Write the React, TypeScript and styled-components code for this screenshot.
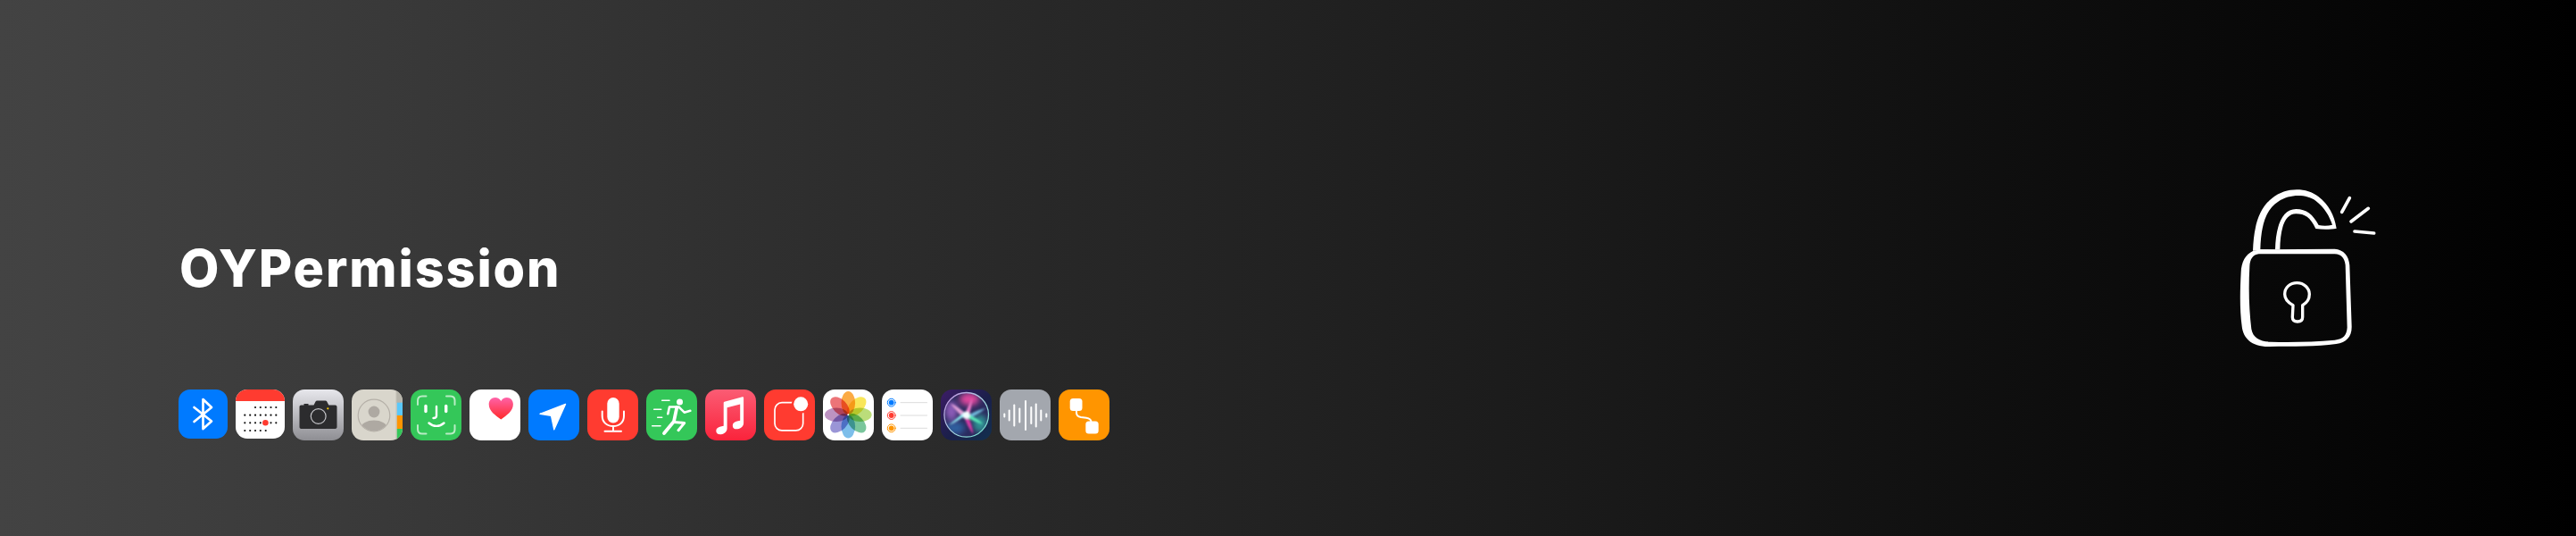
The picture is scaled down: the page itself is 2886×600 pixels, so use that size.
import React from "react";
import styled, { createGlobalStyle } from "styled-components";

const Global = createGlobalStyle`
  html, body { margin: 0; padding: 0; background: #000; }
`;

const Banner = styled.div`
  width: 2886px;
  height: 600px;
  box-sizing: border-box;
  padding: 0 224px 0 200px;
  display: flex;
  justify-content: space-between;
  background: linear-gradient(90deg, #434343 0%, #000 100%);
  overflow: hidden;
`;

const Intro = styled.div`
  display: flex;
  flex-direction: column;
  padding-top: 266px;
`;

const Title = styled.h1`
  margin: 0 0 102px;
  padding-left: 1px;
  font-family: "Inter", "Liberation Sans", sans-serif;
  font-weight: 800;
  font-size: 57.5px;
  line-height: 68px;
  letter-spacing: 1.9px;
  color: #fff;
`;

const IconRow = styled.div`
  display: flex;
  gap: 9px;
`;

const Tile = styled.div<{ $bg: string; $size?: number }>`
  width: ${(p) => p.$size ?? 57}px;
  height: ${(p) => p.$size ?? 57}px;
  border-radius: 13px;
  overflow: hidden;
  background: ${(p) => p.$bg};
  flex: none;
  svg { display: block; width: 100%; height: 100%; }
`;

const LockBox = styled.div`
  padding-top: 190px;
  margin-right: -17px;
  svg { display: block; width: 190px; height: 210px; }
`;

const Petal = styled.ellipse`
  mix-blend-mode: multiply;
`;

const Ico: React.FC<{ children: React.ReactNode; size?: number }> = ({ children, size = 57 }) => (
  <svg viewBox={`0 0 ${size} ${size}`} fill="none" strokeLinecap="round" strokeLinejoin="round">
    {children}
  </svg>
);

const Bluetooth = () => (
  <Tile $bg="#007aff" $size={55}>
    <Ico size={55}>
      <path d="M17.5 20L37 35.500L27.500 44V11L37 20L17.500 36" stroke="#fff" strokeWidth="2.700" />
    </Ico>
  </Tile>
);

const calRows: number[][] = [
  [22, 27.8, 33.7, 39.5, 45.3],
  [10.3, 16.2, 22, 27.8, 33.7, 39.5, 45.3],
  [10.3, 16.2, 22, 27.8, 39.5, 45.3],
  [10.3, 16.2, 22, 27.8, 33.7],
];
const calY = [20, 28.7, 37.3, 46];

const Calendar = () => (
  <Tile $bg="#fff" $size={55}>
    <Ico size={55}>
      <rect width="55" height="13" fill="#ff3b30" />
      {calRows.map((r, i) =>
        r.map((x) => <circle key={`${i}-${x}`} cx={x} cy={calY[i]} r="1.100" fill="#111" />)
      )}
      <circle cx="33.400" cy="37.300" r="3.300" fill="#ff3b30" />
    </Ico>
  </Tile>
);

const Camera = () => (
  <Tile $bg="linear-gradient(180deg, #e7e7ec 0%, #8e8e93 100%)">
    <Ico>
      <path d="M9.500 17.500h3v-1.600h5v1.600h6l2.200-4.200c.3-.6.8-.9 1.400-.9h9.600c.6 0 1.100.3 1.400.9l2.200 4.200h7.200c1.200 0 2 .8 2 2v22.600c0 1.200-.8 2-2 2H9.500c-1.200 0-2-.8-2-2V19.500c0-1.200.8-2 2-2z" fill="#2c2c2e" />
      <circle cx="28.700" cy="30" r="8.400" stroke="#c4c4c8" strokeWidth="1.200" />
      <circle cx="39.300" cy="21.300" r="1.100" fill="#ffcc00" />
    </Ico>
  </Tile>
);

const Contacts = () => (
  <Tile $bg="#d9d6cc">
    <Ico>
      <rect x="50" width="7" height="15" fill="#b7b4aa" />
      <rect x="50.500" y="14.700" width="6.500" height="14.300" fill="#5ac8fa" />
      <rect x="50.500" y="29" width="6.500" height="15" fill="#ff9500" />
      <rect x="50.500" y="44" width="6.500" height="13" fill="#34c759" />
      <rect x="49.500" width="1" height="57" fill="#c3c0b6" />
      <clipPath id="contactClip"><circle cx="25" cy="29" r="17.500" /></clipPath>
      <circle cx="25" cy="25" r="6.400" fill="#aea9a2" />
      <ellipse cx="25" cy="43" rx="14.500" ry="8.500" fill="#aea9a2" clipPath="url(#contactClip)" />
      <circle cx="25" cy="29" r="17.800" stroke="#b5b0a8" strokeWidth="1.200" />
    </Ico>
  </Tile>
);

const FaceId = () => (
  <Tile $bg="#34c759">
    <Ico>
      <g stroke="#b9ecc5" strokeWidth="2">
        <path d="M8 17v-4.500c0-3 2-5 5-5h4.500" />
        <path d="M40 7.500h4.500c3 0 5 2 5 5V17" />
        <path d="M8 40v4.500c0 3 2 5 5 5h4.500" />
        <path d="M40 49.500h4.500c3 0 5-2 5-5V40" />
      </g>
      <g stroke="#fff" strokeWidth="2.400">
        <path d="M17 18.500v6" strokeWidth="3.400" />
        <path d="M39.700 18.500v6" strokeWidth="3.400" />
        <path d="M29 19v10.500c0 1.500-1 2.500-3.500 2.500" />
        <path d="M20.500 37.500c5 4.500 12 4.500 17 0" />
      </g>
    </Ico>
  </Tile>
);

const Health = () => (
  <Tile $bg="#fff">
    <Ico>
      <defs>
        <linearGradient id="heartGrad" x1="0" y1="0" x2="0" y2="1">
          <stop offset="0" stopColor="#ff62a8" />
          <stop offset="1" stopColor="#ff2a2a" />
        </linearGradient>
      </defs>
      <path d="M35.300 33.500C29 29 21.700 24 21.700 16.500C21.700 12 24.800 9 28.700 9C31.500 9 34 10.500 35.300 13C36.600 10.500 39.100 9 41.900 9C45.800 9 48.900 12 48.900 16.500C48.900 24 41.600 29 35.300 33.500Z" fill="url(#heartGrad)" />
    </Ico>
  </Tile>
);

const Location = () => (
  <Tile $bg="#007aff">
    <Ico>
      <path d="M41.500 16.500L13 27.300L25.500 29.200L28.800 44.800Z" fill="#fff" stroke="#fff" strokeWidth="1.400" />
    </Ico>
  </Tile>
);

const Mic = () => (
  <Tile $bg="#ff3b30">
    <Ico>
      <rect x="22.300" y="9" width="13.400" height="28.500" rx="6.700" fill="#fff" />
      <path d="M16.700 24.500v5c0 7 5 11.500 12.300 11.500s12-4.500 12-11.500v-5M29 41v5.800M19.500 46.800h18.500" stroke="#fff" strokeWidth="2" />
    </Ico>
  </Tile>
);

const Fitness = () => (
  <Tile $bg="#34c759">
    <Ico>
      <circle cx="37.500" cy="14" r="3.500" fill="#fff" />
      <g stroke="#fff">
        <path d="M17.700 12.300H26M8.700 22.300H16.700M12.700 31.300H17.700M6.700 40.700H16" strokeWidth="1.600" />
        <path d="M24.300 27.300L26 19.500H36.500L42.700 25.700L49.300 23.800" strokeWidth="2.600" />
        <path d="M34.300 20L31 35.700L20 49" strokeWidth="3.800" />
        <path d="M31 36.500L42.700 37.500L36 45.700" strokeWidth="3" />
      </g>
    </Ico>
  </Tile>
);

const Music = () => (
  <Tile $bg="linear-gradient(180deg, #fb5c74 0%, #fa233b 100%)">
    <Ico>
      <path d="M21.500 13.800L41.800 8.200c.8-.2 1.300.2 1.300 1V37.500c0 3.500-2.800 6.300-6.800 6.800-3.300.4-5.500-1.200-5.500-3.900 0-2.600 1.900-4.300 5-4.900l3.400-.7V16.600L24.600 20.300V43.500c0 3.500-2.800 6.100-6.800 6.700-3.300.4-5.500-1.200-5.500-3.900 0-2.600 1.900-4.300 5-4.900l3.400-.7V15c0-.6.200-1 .8-1.200Z" fill="#fff" />
    </Ico>
  </Tile>
);

const Notification = () => (
  <Tile $bg="#ff3b30">
    <Ico>
      <rect x="12" y="14.700" width="31.700" height="31.200" rx="8" stroke="#fff" strokeWidth="1.700" />
      <circle cx="41.200" cy="16.300" r="10.500" fill="#ff3b30" />
      <circle cx="41.200" cy="16.300" r="8" fill="#fff" />
    </Ico>
  </Tile>
);

const petals: [number, string][] = [
  [0, "#fbab45"],
  [45, "#f9e65a"],
  [90, "#bbdd7a"],
  [135, "#7ac69c"],
  [180, "#7dbeea"],
  [225, "#9a95d6"],
  [270, "#bd93c2"],
  [315, "#ec7478"],
];

const Photos = () => (
  <Tile $bg="#fff">
    <Ico>
      {petals.map(([a, c]) => (
        <Petal key={a} cx="28.300" cy="15" rx="7.800" ry="13" fill={c} transform={`rotate(${a} 28.300 28.300)`} />
      ))}
      <circle cx="28.300" cy="28.300" r="1" fill="#fff" />
    </Ico>
  </Tile>
);

const Reminders = () => (
  <Tile $bg="#fff">
    <Ico>
      {([
        [14.700, "#007aff"],
        [29, "#ff3b30"],
        [43.300, "#ff9500"],
      ] as [number, string][]).map(([y, c]) => (
        <g key={y}>
          <circle cx="10.700" cy={y} r="4.400" stroke={c} strokeWidth="1" />
          <circle cx="10.700" cy={y} r="2.900" fill={c} />
          <path d={`M21 ${y}H50.500`} stroke="#dcdcdc" strokeWidth="1" />
        </g>
      ))}
    </Ico>
  </Tile>
);

const Siri = () => (
  <Tile $bg="linear-gradient(135deg, #3c1c66 0%, #1a1f4a 55%, #12304f 100%)">
    <Ico>
      <defs>
        <linearGradient id="siriRing" x1="0" y1="0" x2="1" y2="1">
          <stop offset="0" stopColor="#c48ae0" />
          <stop offset="0.500" stopColor="#a9cfe0" />
          <stop offset="1" stopColor="#6fe6cf" />
        </linearGradient>
        <filter id="siriBlur" x="-30%" y="-30%" width="160%" height="160%">
          <feGaussianBlur stdDeviation="3" />
        </filter>
        <filter id="siriSoft" x="-30%" y="-30%" width="160%" height="160%">
          <feGaussianBlur stdDeviation="0.800" />
        </filter>
        <clipPath id="siriClip"><circle cx="28.700" cy="28.300" r="24.800" /></clipPath>
      </defs>
      <circle cx="28.700" cy="28.300" r="24.800" fill="#2b2a5e" />
      <g clipPath="url(#siriClip)">
        <g filter="url(#siriBlur)">
          <ellipse cx="32" cy="11" rx="11" ry="7" fill="#e0479e" />
          <ellipse cx="12" cy="24" rx="7" ry="11" fill="#8c5bb8" />
          <ellipse cx="16" cy="43" rx="11" ry="7" fill="#2f5f9e" />
          <ellipse cx="44" cy="38" rx="8" ry="10" fill="#2f8f92" />
        </g>
        <g filter="url(#siriSoft)">
          <path d="M30 29C22 21 15 17 11 16C16 22 21 28 26 32Z" fill="#e2a0d8" />
          <path d="M30 29C34 37 36 45 36 50C32 44 28 37 26 30Z" fill="#d43aa6" />
          <path d="M27 27L35 10C34.500 17 33.500 24 31 31Z" fill="#ef7ccb" />
          <path d="M28 30C37 25 45 22 50 21C43 27 36 31 30 33Z" fill="#6fb7d9" />
          <path d="M29 27C36 30 44 34 47 39C40 37 33 33 27 31Z" fill="#58e6b8" />
          <path d="M31 27C23 32 16 37 9 40C16 34 22 29 27 25Z" fill="#8ff0f5" />
          <circle cx="28.700" cy="28.800" r="4" fill="#f2feff" />
        </g>
      </g>
      <circle cx="28.700" cy="28.300" r="24.800" stroke="url(#siriRing)" strokeWidth="1.300" />
    </Ico>
  </Tile>
);

const voiceBars: [number, number][] = [
  [5.300, 3],
  [10.700, 11],
  [16.300, 23],
  [22.300, 15],
  [29, 32],
  [35.300, 18],
  [40.700, 25],
  [46.300, 11],
  [52.300, 3],
];

const Voice = () => (
  <Tile $bg="#a3a7ae">
    <Ico>
      {voiceBars.map(([x, h]) => (
        <path key={x} d={`M${x} ${29 - h / 2}V${29 + h / 2}`} stroke="#fff" strokeWidth="2" />
      ))}
    </Ico>
  </Tile>
);

const Shortcuts = () => (
  <Tile $bg="#ff9500">
    <Ico>
      <rect x="12.700" y="10" width="13.800" height="14" rx="3.500" fill="#fff" />
      <rect x="30.300" y="35.500" width="14.400" height="14" rx="3.500" fill="#fff" />
      <path d="M20 23v3c0 3 2 4.500 5 5l6 .8c3.500.5 5.500 1.500 5.500 4.700" stroke="#fff" strokeWidth="2" />
    </Ico>
  </Tile>
);

const Lock = () => (
  <svg viewBox="0 0 570 630" fill="none" aria-hidden="true">
    <path
      fill="#fff"
      fillRule="evenodd"
      d="M105 272C108 190 125 130 170 95C215 58 285 58 325 90C360 118 378 150 386 197C365 201 340 201 316 198C298 160 280 148 250 148C215 148 197 190 196 268ZM130 268C132 195 145 135 190 107C230 80 285 82 316 104C346 127 362 155 372 185C358 189 340 189 326 186C307 150 285 132 250 132C205 132 182 185 180 268Z"
    />
    <path
      fill="#fff"
      fillRule="evenodd"
      d="M105 273C80 285 66 310 65 345C62 400 60 470 68 525C72 565 100 595 160 594C240 592 320 595 385 585C420 580 438 560 437 525L430 320C428 290 410 268 380 266L130 268ZM125 283C105 285 95 300 94 325C90 400 92 470 100 535C105 565 130 578 165 578C240 580 310 578 380 572C410 568 420 555 422 530L416 320C413 297 403 284 380 283Z"
    />
    <path
      stroke="#fff"
      strokeWidth="10"
      strokeLinejoin="round"
      d="M240 455C220 445 212 430 212 418C212 395 230 380 253 380C277 380 295 398 295 418C295 435 285 448 272 455L272 495C272 505 265 510 255 510C245 510 238 505 238 495Z"
    />
    <g stroke="#fff" strokeWidth="11" strokeLinecap="round">
      <path d="M430 95L404 142" />
      <path d="M493 130L435 174" />
      <path d="M447 207L512 213" />
    </g>
  </svg>
);

export default function App() {
  return (
    <>
      <Global />
      <Banner>
        <Intro>
          <Title>OYPermission</Title>
          <IconRow>
            <Bluetooth />
            <Calendar />
            <Camera />
            <Contacts />
            <FaceId />
            <Health />
            <Location />
            <Mic />
            <Fitness />
            <Music />
            <Notification />
            <Photos />
            <Reminders />
            <Siri />
            <Voice />
            <Shortcuts />
          </IconRow>
        </Intro>
        <LockBox>
          <Lock />
        </LockBox>
      </Banner>
    </>
  );
}
